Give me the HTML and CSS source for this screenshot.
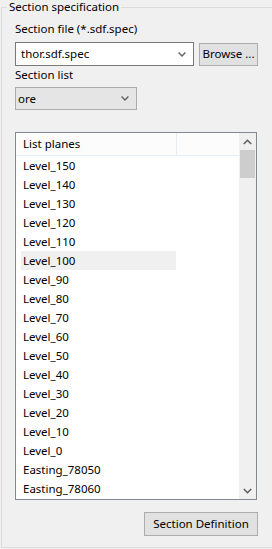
FILE: index.html
```html
<!DOCTYPE html>
<html>
<head>
<meta charset="utf-8">
<link rel="stylesheet" href="styles.css">
</head>
<body>
<fieldset class="group">
  <legend class="legend">Section specification</legend>
  <div class="label label-file">Section file (*.sdf.spec)</div>
  <div class="file-row">
    <div class="combo combo-edit">
      <span class="combo-text">thor.sdf.spec</span>
      <svg class="chev" width="8" height="5" viewBox="0 0 8 5"><polyline points="0.6,0.6 4,4 7.4,0.6" fill="none" stroke="#606060" stroke-width="1.4"/></svg>
    </div>
    <div class="btn btn-browse">Browse ...</div>
  </div>
  <div class="label label-list">Section list</div>
  <div class="combo combo-drop">
    <span class="combo-text">ore</span>
    <svg class="chev" width="8" height="5" viewBox="0 0 8 5"><polyline points="0.6,0.6 4,4 7.4,0.6" fill="none" stroke="#606060" stroke-width="1.4"/></svg>
  </div>
  <div class="listview">
    <div class="lv-main">
      <div class="lv-header">
        <div class="lv-col">List planes</div>
        <div class="lv-rest"></div>
      </div>
      <div class="lv-rows">
        <div class="row">Level_150</div>
        <div class="row">Level_140</div>
        <div class="row">Level_130</div>
        <div class="row">Level_120</div>
        <div class="row">Level_110</div>
        <div class="row hover">Level_100</div>
        <div class="row">Level_90</div>
        <div class="row">Level_80</div>
        <div class="row">Level_70</div>
        <div class="row">Level_60</div>
        <div class="row">Level_50</div>
        <div class="row">Level_40</div>
        <div class="row">Level_30</div>
        <div class="row">Level_20</div>
        <div class="row">Level_10</div>
        <div class="row">Level_0</div>
        <div class="row">Easting_78050</div>
        <div class="row">Easting_78060</div>
      </div>
    </div>
    <div class="vscroll">
      <div class="sb-btn">
        <svg width="9" height="6" viewBox="0 0 9 6"><polyline points="0.8,5 4.5,1.3 8.2,5" fill="none" stroke="#606060" stroke-width="1.6"/></svg>
      </div>
      <div class="sb-track"><div class="sb-thumb"></div></div>
      <div class="sb-btn">
        <svg width="9" height="6" viewBox="0 0 9 6"><polyline points="0.8,1 4.5,4.7 8.2,1" fill="none" stroke="#606060" stroke-width="1.6"/></svg>
      </div>
    </div>
  </div>
  <div class="footer">
    <div class="btn btn-def">Section Definition</div>
  </div>
</fieldset>
</body>
</html>
```
FILE: styles.css
```css
html, body {
  margin: 0;
  padding: 0;
  background: #f0f0f0;
}
body {
  width: 272px;
  height: 549px;
  font-family: "Noto Sans", "Open Sans", sans-serif;
  font-size: 11.5px;
  color: #000;
  overflow: hidden;
}
.group {
  box-sizing: border-box;
  margin: 0 0 0 1px;
  width: 271px;
  height: 548px;
  border: 1px solid #dcdcdc;
  padding: 7px 14px 0 13px;
  display: flex;
  flex-direction: column;
}
.legend {
  margin-left: -8px;
  padding: 0 2px;
  line-height: 14px;
  height: 14px;
}
.label {
  line-height: 16px;
  height: 16px;
}
.file-row {
  display: flex;
  align-items: center;
  gap: 5px;
  margin-top: 5px;
  height: 24px;
}
.combo {
  box-sizing: border-box;
  display: flex;
  align-items: center;
  justify-content: space-between;
}
.combo-edit {
  width: 179px;
  height: 24px;
  background: #fff;
  border: 1px solid #7a7a7a;
  padding: 0 7px 0 5px;
}
.combo-drop {
  width: 122px;
  height: 23px;
  background: #e5e5e5;
  border: 1px solid #acacac;
  padding: 0 7px 0 2px;
  margin-top: 4px;
}
.combo-text {
  line-height: 16px;
}
.label-list {
  margin-top: 1px;
}
.btn {
  box-sizing: border-box;
  background: #e1e1e1;
  border: 1px solid #adadad;
  display: flex;
  align-items: center;
  justify-content: center;
  line-height: 16px;
}
.btn-browse {
  width: 59px;
  height: 23px;
}
.listview {
  box-sizing: border-box;
  margin-top: 22px;
  width: 242px;
  height: 368px;
  border: 1px solid #828790;
  background: #fff;
  display: flex;
}
.lv-main {
  flex: 1;
  display: flex;
  flex-direction: column;
}
.lv-header {
  display: flex;
  height: 22px;
  border-bottom: 1px solid #e5effa;
  background: #fcfcfc;
}
.lv-col {
  box-sizing: border-box;
  width: 161px;
  padding-left: 7px;
  line-height: 22px;
  border-right: 1px solid #e5effa;
}
.lv-rest {
  flex: 1;
}
.lv-rows {
  display: flex;
  flex-direction: column;
}
.row {
  margin-left: 5px;
  width: 155px;
  height: 19px;
  line-height: 19px;
  padding-left: 2px;
  box-sizing: border-box;
}
.row.hover {
  background: #f0f0f0;
}
.vscroll {
  width: 17px;
  background: #f0f0f0;
  display: flex;
  flex-direction: column;
}
.sb-btn {
  height: 17px;
  display: flex;
  align-items: center;
  justify-content: center;
}
.sb-track {
  flex: 1;
  padding: 0 1px;
}
.sb-thumb {
  height: 28px;
  background: #cdcdcd;
}
.footer {
  display: flex;
  justify-content: flex-end;
  margin-top: 12px;
}
.btn-def {
  width: 114px;
  height: 24px;
}
```
